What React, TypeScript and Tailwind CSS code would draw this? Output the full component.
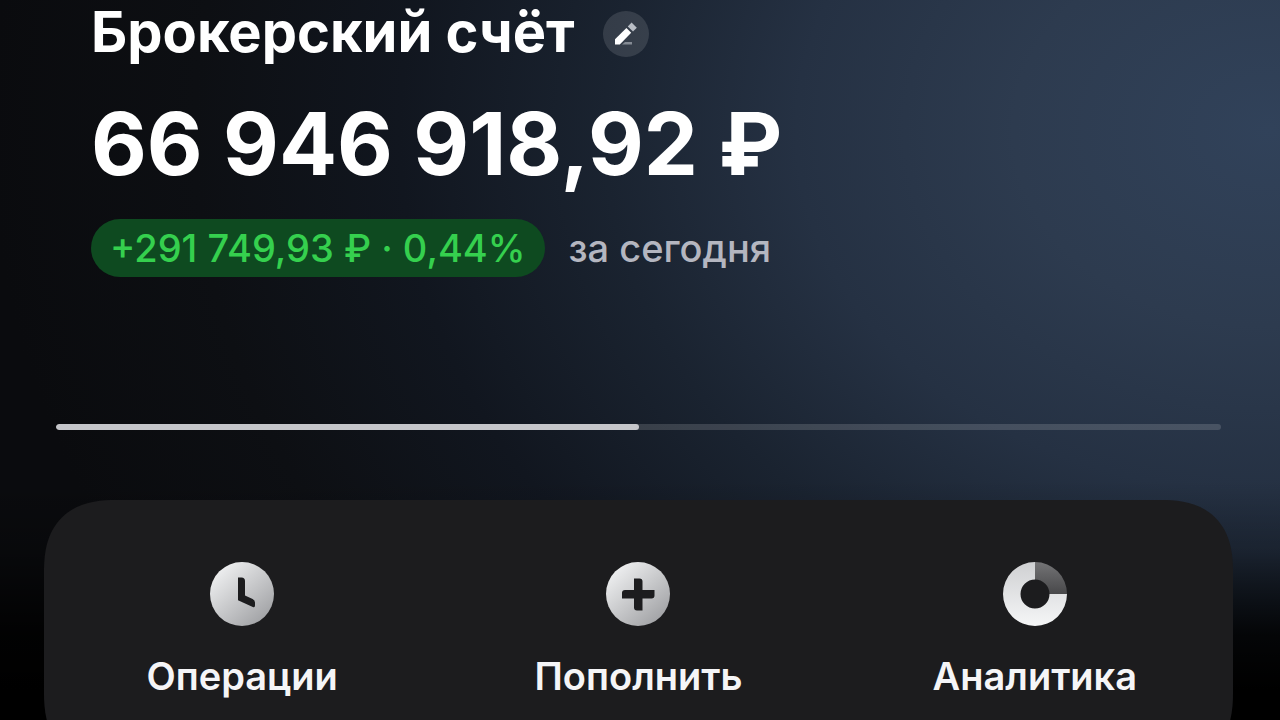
import type { ReactNode } from 'react'

type Action = {
  label: string
  icon: ReactNode
}

function ClockIcon() {
  return (
    <svg viewBox="0 0 64 64" className="size-16" aria-hidden="true">
      <defs>
        <linearGradient id="clock-fill" x1="0.15" y1="0.1" x2="0.85" y2="0.9">
          <stop offset="0" stopColor="#eeeff0" />
          <stop offset="1" stopColor="#a2a3a6" />
        </linearGradient>
      </defs>
      <circle cx="32" cy="32" r="32" fill="url(#clock-fill)" />
      <path
        d="M28 15.5H31.5Q35 15.5 35 19V33.6L42.6 37Q45 38.1 45 40.6V43.4Q45 45.9 42.8 44.9L28 38.2Z"
        fill="#1c1c1e"
      />
    </svg>
  )
}

function PlusIcon() {
  return (
    <svg viewBox="0 0 64 64" className="size-16" aria-hidden="true">
      <defs>
        <linearGradient id="plus-fill" x1="0.15" y1="0.1" x2="0.85" y2="0.9">
          <stop offset="0" stopColor="#eeeff0" />
          <stop offset="1" stopColor="#a2a3a6" />
        </linearGradient>
      </defs>
      <circle cx="32" cy="32" r="32" fill="url(#plus-fill)" />
      <path
        d="M28 16.5H33.5Q36.5 16.5 36.5 19.5V28H48.5V33.5Q48.5 36.5 45.5 36.5H36.5V48.5H31Q28 48.5 28 45.5V36.5H16V31Q16 28 19 28H28Z"
        fill="#1c1c1e"
      />
    </svg>
  )
}

function DonutIcon() {
  return (
    <svg viewBox="0 0 64 64" className="size-16" aria-hidden="true">
      <defs>
        <linearGradient id="donut-main" x1="0" y1="0" x2="0" y2="1">
          <stop offset="0" stopColor="#cfd0d2" />
          <stop offset="1" stopColor="#f5f6f7" />
        </linearGradient>
        <linearGradient id="donut-slice" x1="0" y1="0" x2="0" y2="1">
          <stop offset="0" stopColor="#747476" />
          <stop offset="1" stopColor="#48484a" />
        </linearGradient>
      </defs>
      <path d="M32 0A32 32 0 1 0 64 32H46.5A14.5 14.5 0 1 1 32 17.5Z" fill="url(#donut-main)" />
      <path d="M32 0A32 32 0 0 1 64 32H46.5A14.5 14.5 0 0 0 32 17.5Z" fill="url(#donut-slice)" />
    </svg>
  )
}

function PencilIcon() {
  return (
    <svg viewBox="0 0 24 24" className="size-6" aria-hidden="true">
      <path d="M8 22.4L11 19.9H18V22.4Z" fill="#858b94" />
      <path d="M1 22.4V17.2L12.4 6L17.2 10.8L5.8 22.4Z" fill="#fff" />
      <path d="M13.8 4.4L17.6 0.6L22.8 5.8L19 9.6Z" fill="#b9bec6" />
    </svg>
  )
}

const actions: Action[] = [
  { label: 'Операции', icon: <ClockIcon /> },
  { label: 'Пополнить', icon: <PlusIcon /> },
  { label: 'Аналитика', icon: <DonutIcon /> },
]

export default function App() {
  const progress = 50

  return (
    <main className="h-screen overflow-hidden bg-[#0b0c0f] bg-[linear-gradient(to_bottom,transparent_480px,rgba(0,0,0,0.2)_550px,rgba(0,0,0,0.85)_635px,#000_690px),radial-gradient(ellipse_1280px_980px_at_1270px_130px,#31425a_0%,#2d3b4f_20%,#253143_37%,#1a2330_52%,#11161f_68%,#0d0f13_84%,#0a0b0e_100%)] pr-[47px] pl-11 font-['Inter','Noto_Sans',sans-serif] text-white">
      <header className="pl-[47px]">
        <div className="flex h-[68px] gap-7">
          <h1 className="text-[56px] leading-[64px] font-bold">Брокерский счёт</h1>
          <button
            type="button"
            aria-label="Изменить название"
            className="flex size-[46px] items-center justify-center self-center rounded-full bg-white/12"
          >
            <PencilIcon />
          </button>
        </div>
        <p className="mt-6 text-[86px] leading-[104px] font-bold">66 946 918,92 ₽</p>
        <div className="mt-[23px] flex items-center gap-6 text-[38px] leading-[58px] font-medium">
          <span className="rounded-full bg-[#0e4a20] px-[19px] text-[#35d04e]">+291 749,93 ₽ · 0,44%</span>
          <span className="text-[#b4b6c0]">за сегодня</span>
        </div>
      </header>

      <div
        role="progressbar"
        aria-label="Прогресс"
        aria-valuenow={progress}
        aria-valuemin={0}
        aria-valuemax={100}
        className="mx-3 mt-[147px] h-[6px] overflow-hidden rounded-full bg-white/15"
      >
        <div className="h-full rounded-full bg-[#c5c6ca]" style={{ width: `${progress}%` }} />
      </div>

      <nav className="mt-[70px] grid h-[265px] grid-cols-3 items-start rounded-[72px] bg-[#1c1c1e] pt-[62px] [corner-shape:superellipse(1.3)]">
        {actions.map((action) => (
          <button key={action.label} type="button" className="flex flex-col items-center gap-6">
            {action.icon}
            <span className="text-[38px] leading-[52px] font-semibold text-[#f5f5f7]">{action.label}</span>
          </button>
        ))}
      </nav>
    </main>
  )
}
